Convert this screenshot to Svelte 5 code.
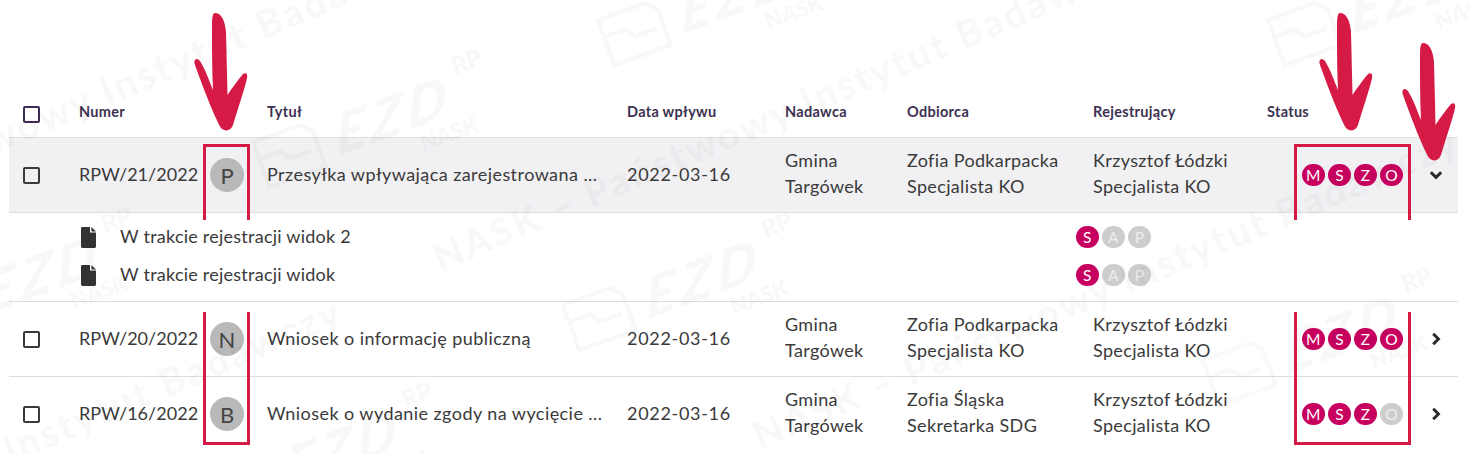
<script>
  const headers = ['Numer', 'Tytuł', 'Data wpływu', 'Nadawca', 'Odbiorca', 'Rejestrujący', 'Status'];
  const rows = [
    { num: 'RPW/21/2022', av: 'P', title: 'Przesyłka wpływająca zarejestrowana ...', odb: ['Zofia Podkarpacka', 'Specjalista KO'], off: [], open: true },
    { num: 'RPW/20/2022', av: 'N', title: 'Wniosek o informację publiczną', odb: ['Zofia Podkarpacka', 'Specjalista KO'], off: [] },
    { num: 'RPW/16/2022', av: 'B', title: 'Wniosek o wydanie zgody na wycięcie ...', odb: ['Zofia Śląska', 'Sekretarka SDG'], off: ['O'] }
  ];
  const subs = ['W trakcie rejestracji widok 2', 'W trakcie rejestracji widok'];
  const marks = [
    [335, 157], [680, 35], [1350, 35], [645, 320], [1285, 375], [-15, 315], [285, 490]
  ];
  const lines = [
    [-260, 262], [440, 272], [760, 450], [-357, 620]
  ];
</script>

<div class="page">
  <div class="table">
    <div class="row head">
      <span class="check purple"></span>
      {#each headers as h}<span class="th">{h}</span>{/each}
    </div>
    {#each rows as r, i}
      <div class="row body" class:open={r.open} class:last={i === rows.length - 1}>
        <span class="check"></span>
        <div class="numcell">
          <span class="num">{r.num}</span>
          <span class="avatar">{r.av}</span>
        </div>
        <span class="cell title">{r.title}</span>
        <span class="cell date">2022-03-16</span>
        <div class="cell stack"><span>Gmina</span><span>Targówek</span></div>
        <div class="cell stack"><span>{r.odb[0]}</span><span>{r.odb[1]}</span></div>
        <div class="cell stack"><span>Krzysztof Łódzki</span><span>Specjalista KO</span></div>
        <div class="statuscell">
          <div class="chips">
            {#each ['M', 'S', 'Z', 'O'] as c}
              <span class="chip" class:off={r.off.includes(c)}>{c}</span>
            {/each}
          </div>
          <svg class="chev" class:down={r.open} viewBox="0 0 12 12" width="12" height="12" aria-hidden="true">
            <path d="M3.2 .8 8.400 6 3.200 11.200" fill="none" stroke="#2b2b2b" stroke-width="3"/>
          </svg>
        </div>
      </div>
      {#if r.open}
        <div class="subs">
          {#each subs as s}
            <div class="sub">
              <svg class="doc" viewBox="0 0 15 21" width="15" height="21" aria-hidden="true">
                <path d="M1.4 0H9v5.6h6V19.6a1.4 1.4 0 0 1-1.4 1.4H1.4A1.4 1.4 0 0 1 0 19.6V1.4A1.4 1.4 0 0 1 1.4 0Z M10.4 0 15 4.400H10.400Z" fill="#333"/>
              </svg>
              <span class="subtext">{s}</span>
              <div class="chips small">
                <span class="chip">S</span><span class="chip off">A</span><span class="chip off">P</span>
              </div>
            </div>
          {/each}
        </div>
      {/if}
    {/each}
  </div>

  <svg class="watermark" width="1469" height="454" viewBox="0 0 1469 454" aria-hidden="true">
    {#each lines as l}
      <text transform="translate({l[0]} {l[1]}) rotate(-23)" class="wm-text">NASK – Państwowy Instytut Badawczy</text>
    {/each}
    {#each marks as m}
      <g transform="translate({m[0]} {m[1]}) rotate(-20)" class="wm-logo">
        <path d="M-72 -42H-22L-12 -32V6H-72ZM-72 -24H-50L-42 -14H-20" fill="none" stroke="#000" stroke-width="4"/>
        <text x="0" y="0" transform="skewX(-25)" class="wm-ezd">EZD</text>
        <text x="141" y="-36" class="wm-rp">RP</text>
        <text x="85" y="25" class="wm-nask">NASK</text>
      </g>
    {/each}
  </svg>

  <div class="marker m1 top"></div>
  <div class="marker m1 bottom"></div>
  <div class="marker m2 top"></div>
  <div class="marker m2 bottom"></div>

  <svg class="arrows" width="1469" height="454" viewBox="0 0 1469 454" aria-hidden="true">
    <defs>
      <path id="arrow" d="M215 13C221 13 225 20 226 32L227.500 95C232 88 238 80 243 74C246 72 248 74 247 78C245 88 238 108 233 125C231 131 225 132 221 128C215 118 204 90 195 65C193 59 197 57 200 61C205 69 209 80 213 90C212 70 212 50 212 30C212 20 212 13 215 13Z" fill="#d51a45"/>
    </defs>
    <use href="#arrow"/>
    <use href="#arrow" x="1125"/>
    <use href="#arrow" x="1208" y="30"/>
  </svg>
</div>

<style>
  :global(body) { margin: 0; background: #fff; }
  .page {
    position: relative;
    width: 1469px;
    height: 454px;
    overflow: hidden;
    padding: 87px 11px 0 9px;
    box-sizing: border-box;
    font-family: "Lato", "Noto Sans", sans-serif;
    color: #3a3a3a;
    font-size: 18px;
  }
  .row {
    display: grid;
    grid-template-columns: 70px 188px 360px 158px 122px 186px 174px 191px;
    align-items: center;
    border-bottom: 1px solid #dedede;
    height: 74px;
  }
  .head { height: 50px; }
  .last { border-bottom: 0; }
  .open { background: #f1f0f3; }
  .check {
    width: 13px;
    height: 13px;
    margin-left: 14px;
    border: 2px solid #3a3a3a;
    border-radius: 2px;
  }
  .purple { border-color: #3e2c57; margin-top: 4px; }
  .th {
    font-weight: 700;
    font-size: 14.5px;
    letter-spacing: .3px;
    color: #3d3152;
    margin-bottom: 2px;
  }
  .numcell { display: flex; align-items: center; }
  .num { width: 131px; letter-spacing: .03px; margin-bottom: 2px; }
  .avatar {
    width: 34px;
    height: 34px;
    border-radius: 50%;
    background: #b9b9b9;
    display: flex;
    align-items: center;
    justify-content: center;
    font-size: 22px;
    color: #444;
  }
  .cell { letter-spacing: .35px; margin-bottom: 2px; }
  .title { letter-spacing: .44px; }
  .date { letter-spacing: .7px; }
  .stack { display: flex; flex-direction: column; line-height: 26px; margin-bottom: 4px; }
  .statuscell { display: flex; align-items: center; padding-left: 35px; grid-column: 8; }
  .chips { display: flex; gap: 3.600px; width: 128px; flex: none; }
  .chip {
    width: 22.500px;
    height: 22.500px;
    border-radius: 50%;
    background: #c7005f;
    color: #fff;
    font-size: 15.500px;
    display: flex;
    align-items: center;
    justify-content: center;
  }
  .chip.off { background: #cdcdcd; color: #eee; }
  .chev { flex: none; }
  .chev.down { transform: rotate(90deg); }
  .subs {
    height: 89px;
    padding-top: 5px;
    box-sizing: border-box;
    border-bottom: 1px solid #dedede;
  }
  .sub { display: flex; align-items: center; height: 38px; padding-left: 72px; }
  .doc { flex: none; }
  .subtext { width: 956px; margin-left: 24px; letter-spacing: .24px; margin-bottom: 2px; flex: none; }
  .small { width: auto; }
  .watermark, .arrows { position: absolute; inset: 0; pointer-events: none; }
  .wm-text { font: 700 38px "Lato", sans-serif; fill: #000; opacity: .022; letter-spacing: 3px; }
  .wm-logo { opacity: .022; }
  .wm-ezd { font: 900 54px "Lato", sans-serif; fill: #000; letter-spacing: 6px; }
  .wm-rp { font: 900 24px "Lato", sans-serif; fill: #000; }
  .wm-nask { font: 900 22px "Lato", sans-serif; fill: #000; }
  .marker {
    position: absolute;
    box-sizing: border-box;
    border: 3px solid #d51a45;
  }
  .m1 { left: 203px; width: 47px; }
  .m2 { left: 1294px; width: 117px; }
  .top { top: 144px; height: 76px; border-bottom: 0; }
  .bottom { top: 312px; height: 133px; border-top: 0; }
</style>
